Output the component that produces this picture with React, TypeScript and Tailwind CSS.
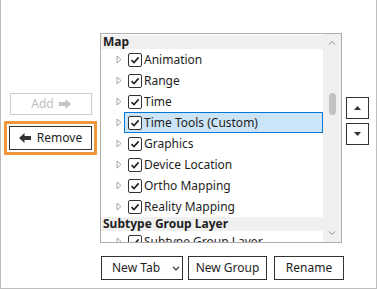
import React from "react";

const font = { fontFamily: '"Noto Sans", "Open Sans", sans-serif' };

type Row =
  | { kind: "header"; label: string }
  | { kind: "item"; label: string; selected?: boolean };

const rows: Row[] = [
  { kind: "header", label: "Map" },
  { kind: "item", label: "Animation" },
  { kind: "item", label: "Range" },
  { kind: "item", label: "Time" },
  { kind: "item", label: "Time Tools (Custom)", selected: true },
  { kind: "item", label: "Graphics" },
  { kind: "item", label: "Device Location" },
  { kind: "item", label: "Ortho Mapping" },
  { kind: "item", label: "Reality Mapping" },
  { kind: "header", label: "Subtype Group Layer" },
  { kind: "item", label: "Subtype Group Layer" },
];

const Expander = () => (
  <svg width="6" height="9" viewBox="0 0 6 9" className="shrink-0">
    <path d="M1 1 L5 4.5 L1 8 Z" fill="none" stroke="#a6a6a6" strokeWidth="1" />
  </svg>
);

const CheckBox = () => (
  <div className="w-[14px] h-[14px] border border-[#333] rounded-[2px] bg-white flex items-center justify-center shrink-0">
    <svg width="10" height="10" viewBox="0 0 10 10">
      <path d="M1.5 5.2 L4 7.6 L8.6 2.4" fill="none" stroke="#222" strokeWidth="1.6" />
    </svg>
  </div>
);

const BlockArrow: React.FC<{ dir: "left" | "right"; color: string }> = ({ dir, color }) => (
  <svg width="12" height="10" viewBox="0 0 12 10" className={dir === "left" ? "" : "-scale-x-100"}>
    <path d="M0 5 L5.5 0 L5.5 3 L12 3 L12 7 L5.5 7 L5.5 10 Z" fill={color} />
  </svg>
);

const ItemRow: React.FC<{ row: Row }> = ({ row }) => {
  if (row.kind === "header") {
    return (
      <div className="h-[14px] shrink-0 bg-[#f0f0f0] flex items-center pl-[2px] text-[12px] font-bold text-[#1e1e1e] leading-[14px] whitespace-nowrap">
        {row.label}
      </div>
    );
  }
  return (
    <div className="h-[21px] shrink-0 flex items-center pl-[15px]">
      <Expander />
      <div
        className={
          "ml-[2px] h-[21px] flex-1 flex items-center gap-[2px] pl-[3px] border " +
          (row.selected ? "border-[#0078d7] bg-[#cce4f7]" : "border-transparent")
        }
      >
        <CheckBox />
        <span className="text-[12px] text-[#1e1e1e] whitespace-nowrap">{row.label}</span>
      </div>
    </div>
  );
};

const Btn: React.FC<{ className?: string; children: React.ReactNode }> = ({ className = "", children }) => (
  <div
    className={
      "h-[24px] border border-[#333] bg-white flex items-center justify-center text-[12px] text-[#1e1e1e] whitespace-nowrap " +
      className
    }
  >
    {children}
  </div>
);

export default function App() {
  return (
    <div
      style={font}
      className="w-[377px] h-[289px] bg-white flex flex-col border-l border-r border-b border-[#bdbdbd] overflow-hidden"
    >
      <div className="flex mt-[33px] h-[210px]">
        {/* left buttons */}
        <div className="w-[99px] flex flex-col pt-[60px] pl-[3px]">
          <div className="ml-[6px] w-[82px] h-[22px] border border-[#cccccc] flex items-center justify-center gap-[5px] text-[12px] text-[#bfbfbf]">
            <span>Add</span>
            <BlockArrow dir="right" color="#c4c4c4" />
          </div>
          <div className="mt-[6px] w-[93px] border-[3px] border-[#f0963c] p-[2px]">
            <div className="h-[24px] border border-[#333] flex items-center justify-center gap-[6px] text-[12px] text-[#1e1e1e]">
              <BlockArrow dir="left" color="#333" />
              <span>Remove</span>
            </div>
          </div>
        </div>

        {/* list box */}
        <div className="w-[242px] h-[210px] border border-[#adadad] flex overflow-hidden">
          <div className="flex-1 flex flex-col pt-[1px] overflow-hidden">
            {rows.map((r, i) => (
              <ItemRow key={i} row={r} />
            ))}
          </div>
          <div className="w-[18px] bg-[#f0f0f0] flex flex-col items-center">
            <svg width="8" height="6" viewBox="0 0 8 6" className="mt-[6px]">
              <path d="M1 4.5 L4 1.5 L7 4.5" fill="none" stroke="#8a8a8a" strokeWidth="1" />
            </svg>
            <div className="mt-[47px] w-[7px] h-[22px] rounded-full bg-[#c2c2c2]" />
            <div className="flex-1" />
            <svg width="8" height="6" viewBox="0 0 8 6" className="mb-[6px]">
              <path d="M1 1.5 L4 4.5 L7 1.5" fill="none" stroke="#8a8a8a" strokeWidth="1" />
            </svg>
          </div>
        </div>

        {/* up / down */}
        <div className="ml-[4px] pt-[64px] flex flex-col gap-[4px]">
          <div className="w-[23px] h-[22px] border border-[#333] flex items-center justify-center">
            <svg width="7" height="4" viewBox="0 0 7 4">
              <path d="M0 4 L3.5 0 L7 4 Z" fill="#333" />
            </svg>
          </div>
          <div className="w-[23px] h-[22px] border border-[#333] flex items-center justify-center">
            <svg width="7" height="4" viewBox="0 0 7 4">
              <path d="M0 0 L3.5 4 L7 0 Z" fill="#333" />
            </svg>
          </div>
        </div>
      </div>

      {/* bottom buttons */}
      <div className="flex mt-[13px] ml-[100px] gap-[5px]">
        <Btn className="w-[82px] justify-start pl-[10px]">
          <span>New Tab</span>
          <svg width="8" height="5" viewBox="0 0 8 5" className="ml-[12px]">
            <path d="M1 1 L4 4 L7 1" fill="none" stroke="#333" strokeWidth="1.2" />
          </svg>
        </Btn>
        <Btn className="w-[79px]">New Group</Btn>
        <Btn className="w-[70px] ml-[2px]">Rename</Btn>
      </div>
    </div>
  );
}
